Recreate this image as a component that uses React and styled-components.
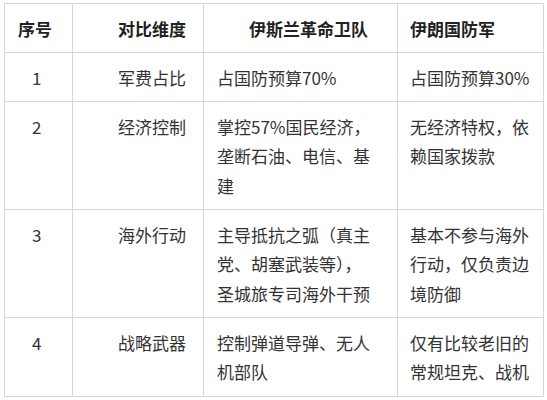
import React from "react"
import styled, { createGlobalStyle } from "styled-components"

const Global = createGlobalStyle`
    html, body {
        margin: 0;
        padding: 0;
        background: #fff;
    }
    body {
        font-family: "Noto Sans CJK SC", "Noto Sans", sans-serif;
        color: #333;
    }
`

const Grid = styled.div`
    display: grid;
    grid-template-columns: 68px 131px 194px 146px;
    margin: 3px 0 0 4px;
    width: max-content;
    border-top: 1px solid #d6d6d6;
    border-left: 1px solid #d6d6d6;
`

const Cell = styled.div`
    box-sizing: border-box;
    border-right: 1px solid #d6d6d6;
    border-bottom: 1px solid #d6d6d6;
    padding: 9.5px 4px 9px ${p => p.$indent ?? 13}px;
    font-size: 17px;
    line-height: 29.5px;
    font-weight: ${p => (p.$head ? 700 : 400)};
    color: ${p => (p.$head ? "#222" : "#333")};
    overflow: hidden;
`

const Line = styled.span`
    display: block;
    white-space: nowrap;
`

const headers = [
    { text: "序号", indent: 13 },
    { text: "对比维度", indent: 45 },
    { text: "伊斯兰革命卫队", indent: 45 },
    { text: "伊朗国防军", indent: 12 },
]

// each cell is a list of its printed lines
const rows = [
    [["1"], ["军费占比"], ["占国防预算70%"], ["占国防预算30%"]],
    [["2"], ["经济控制"], ["掌控57%国民经济，", "垄断石油、电信、基", "建"], ["无经济特权，依", "赖国家拨款"]],
    [["3"], ["海外行动"], ["主导抵抗之弧（真主", "党、胡塞武装等），", "圣城旅专司海外干预"], ["基本不参与海外", "行动，仅负责边", "境防御"]],
    [["4"], ["战略武器"], ["控制弹道导弹、无人", "机部队"], ["仅有比较老旧的", "常规坦克、战机"]],
]

const bodyIndent = [27, 45, 13, 12]

const App = () => {
    return (
        <>
            <Global />
            <Grid>
                {headers.map(h => (
                    <Cell key={h.text} $head $indent={h.indent}>{h.text}</Cell>
                ))}
                {rows.map(r =>
                    r.map((lines, i) => (
                        <Cell key={r[0][0] + i} $indent={bodyIndent[i]}>
                            {lines.map(l => <Line key={l}>{l}</Line>)}
                        </Cell>
                    ))
                )}
            </Grid>
        </>
    )
}

export default App
